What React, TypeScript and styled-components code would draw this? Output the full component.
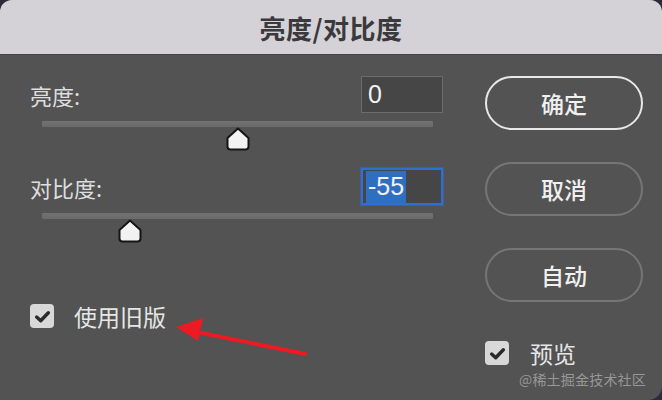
import React from "react";
import styled, { createGlobalStyle } from "styled-components";

const Global = createGlobalStyle`
  html, body { margin: 0; padding: 0; background: #2d2b3b; }
  body { font-family: "Noto Sans CJK SC", "Noto Sans", sans-serif; }
`;

const Dialog = styled.div`
  position: relative;
  width: 662px;
  height: 400px;
  background: #535353;
  border-radius: 12px 12px 14px 0;
  overflow: hidden;
  display: flex;
  flex-direction: column;
`;

const TitleBar = styled.div`
  height: 55px;
  flex: none;
  background: #d4d2d7;
  border-bottom: 1px solid #444;
  display: flex;
  align-items: center;
  justify-content: center;
  font-size: 26px;
  line-height: 1;
  font-weight: 700;
  color: #3a393c;
  letter-spacing: 0.5px;
  padding-top: 1px;
  box-sizing: border-box;
`;

const Body = styled.div`
  display: flex;
  gap: 42px;
  padding: 21px 19px 0 30px;
`;

const LeftCol = styled.div`
  width: 413px;
  display: flex;
  flex-direction: column;
`;

const RightCol = styled.div`
  width: 158px;
  display: flex;
  flex-direction: column;
`;

const Field = styled.div<{ $gap?: number }>`
  display: flex;
  flex-direction: column;
  margin-top: ${(p) => p.$gap ?? 0}px;
`;

const Row = styled.div`
  height: 37px;
  display: flex;
  align-items: center;
  justify-content: space-between;
`;

const Label = styled.span`
  font-size: 22px;
  line-height: 1;
  color: #dedede;
  padding-top: 1px;
`;

const Input = styled.div<{ $focused?: boolean }>`
  width: 82px;
  height: 37px;
  box-sizing: border-box;
  background: #464646;
  border: ${(p) => (p.$focused ? "2px solid #2f6fd4" : "1px solid #6c6c6c")};
  box-shadow: ${(p) => (p.$focused ? "0 0 0 1px rgba(47,111,212,0.45)" : "none")};
  display: flex;
  align-items: center;
  padding-left: ${(p) => (p.$focused ? 3 : 6)}px;
  font-family: "Liberation Sans", Arial, sans-serif;
  font-size: 25px;
  color: #f2f2f2;
`;

const Selected = styled.span`
  background: #2f6fc2;
  height: 32px;
  display: flex;
  align-items: center;
  padding: 0 2px;
`;

const Slider = styled.div`
  position: relative;
  margin-top: 8px;
  margin-left: 12px;
  width: 391px;
  height: 30px;
`;

const Track = styled.div`
  height: 6px;
  background: linear-gradient(to bottom, #727272, #6a6a6a);
  border-radius: 1px;
`;

const ThumbWrap = styled.div`
  position: absolute;
  top: 6px;
  width: 24px;
  height: 24px;
`;

const PillButton = styled.div<{ $primary?: boolean }>`
  height: 54px;
  box-sizing: border-box;
  border-radius: 27px;
  border: 2px solid ${(p) => (p.$primary ? "#e8e8e8" : "#767676")};
  display: flex;
  align-items: center;
  justify-content: center;
  font-size: 23px;
  line-height: 1;
  font-weight: 500;
  color: #f0f0f0;
  & + & {
    margin-top: 32px;
  }
`;

const CheckRow = styled.div<{ $top: number; $gap: number }>`
  display: flex;
  align-items: center;
  gap: ${(p) => p.$gap}px;
  margin-top: ${(p) => p.$top}px;
`;

const Box = styled.div`
  width: 24px;
  height: 24px;
  border-radius: 4px;
  background: #d8d8d8;
  display: flex;
  align-items: center;
  justify-content: center;
`;

const CheckText = styled.span`
  font-size: 23px;
  line-height: 1;
  color: #e6e6e6;
`;

const Arrow = styled.svg`
  position: absolute;
  left: 0;
  top: 0;
  pointer-events: none;
`;

const Watermark = styled.div`
  position: absolute;
  right: 16px;
  bottom: 14px;
  font-size: 14px;
  line-height: 1;
  color: rgba(175, 175, 175, 0.75);
  letter-spacing: 0.2px;
`;

const Thumb = ({ pct }: { pct: number }) => (
  <ThumbWrap style={{ left: `calc(${pct}% - 12px)` }}>
    <svg width="24" height="24" viewBox="0 0 24 24">
      <path
        d="M12 1.5 L22.5 11 V19.5 Q22.5 22.5 19.5 22.5 H4.5 Q1.5 22.5 1.5 19.5 V11 Z"
        fill="#f2f2f2"
        stroke="#151515"
        strokeWidth="2"
        strokeLinejoin="round"
      />
    </svg>
  </ThumbWrap>
);

const Check = () => (
  <svg width="17" height="17" viewBox="0 0 16 16">
    <polyline
      points="2.5,8.5 6.3,12 13.5,4.5"
      fill="none"
      stroke="#2b2b2b"
      strokeWidth="3.2"
      strokeLinecap="round"
      strokeLinejoin="round"
    />
  </svg>
);

const toPct = (v: number, min: number, max: number) => ((v - min) / (max - min)) * 100;

export default function App() {
  return (
    <>
      <Global />
      <Dialog>
        <TitleBar>亮度/对比度</TitleBar>
        <Body>
          <LeftCol>
            <Field>
              <Row>
                <Label>亮度:</Label>
                <Input>0</Input>
              </Row>
              <Slider>
                <Track />
                <Thumb pct={toPct(0, -150, 150)} />
              </Slider>
            </Field>
            <Field $gap={17}>
              <Row>
                <Label>对比度:</Label>
                <Input $focused>
                  <Selected>-55</Selected>
                </Input>
              </Row>
              <Slider>
                <Track />
                <Thumb pct={toPct(-55, -100, 100)} />
              </Slider>
            </Field>
            <CheckRow $top={61} $gap={20}>
              <Box>
                <Check />
              </Box>
              <CheckText>使用旧版</CheckText>
            </CheckRow>
          </LeftCol>
          <RightCol>
            <PillButton $primary>确定</PillButton>
            <PillButton>取消</PillButton>
            <PillButton>自动</PillButton>
            <CheckRow $top={39} $gap={21}>
              <Box>
                <Check />
              </Box>
              <CheckText>预览</CheckText>
            </CheckRow>
          </RightCol>
        </Body>
        <Arrow width="662" height="400" viewBox="0 0 662 400">
          <line x1="305" y1="354" x2="192" y2="331" stroke="#ec1a22" strokeWidth="4" strokeLinecap="round" />
          <polygon points="176,327 203,318 198,341" fill="#ec1a22" />
        </Arrow>
        <Watermark>@稀土掘金技术社区</Watermark>
      </Dialog>
    </>
  );
}
